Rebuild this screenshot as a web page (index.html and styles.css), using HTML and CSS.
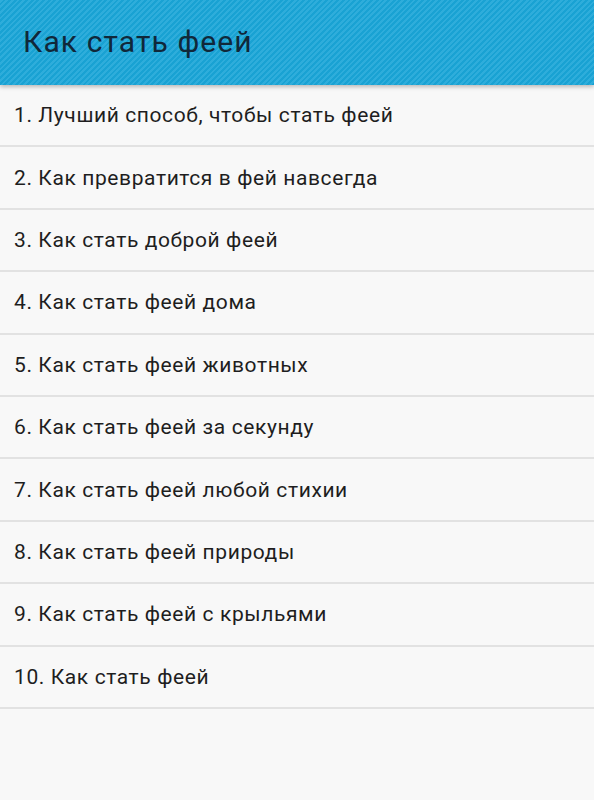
FILE: index.html
```html
<!DOCTYPE html>
<html lang="ru">
<head>
    <meta charset="UTF-8">
    <meta name="viewport" content="width=device-width, initial-scale=1.0">
    <title>Как стать феей</title>
    <link rel="stylesheet" href="styles.css">
</head>
<body>
    <!-- Action bar -->
    <header class="action-bar">
        <h1 class="title">Как стать феей</h1>
    </header>

    <!-- List -->
    <ul class="topic-list">
        <li class="topic-item">1. Лучший способ, чтобы стать феей</li>
        <li class="topic-item">2. Как превратится в фей навсегда</li>
        <li class="topic-item">3. Как стать доброй феей</li>
        <li class="topic-item">4. Как стать феей дома</li>
        <li class="topic-item">5. Как стать феей животных</li>
        <li class="topic-item">6. Как стать феей за секунду</li>
        <li class="topic-item">7. Как стать феей любой стихии</li>
        <li class="topic-item">8. Как стать феей природы</li>
        <li class="topic-item">9. Как стать феей с крыльями</li>
        <li class="topic-item">10. Как стать феей</li>
    </ul>
</body>
</html>
```

FILE: styles.css
```css
/* General */
body {
    margin: 0;
    padding: 0;
    min-height: 100vh;
    background-color: #f8f8f8;
    font-family: 'Roboto', 'Noto Sans', sans-serif;
    color: #222;
}

/* Action bar */
.action-bar {
    position: relative;
    height: 85px;
    padding: 0 23px;
    display: flex;
    align-items: center;
    background-color: #19a2d3;
    background-image: repeating-linear-gradient(
        -45deg,
        #19a2d3 0,
        #19a2d3 2px,
        #2eaddb 2px,
        #2eaddb 4px
    );
    box-shadow: 0 2px 4px rgba(0, 0, 0, 0.25);
}

.title {
    margin: 0;
    padding-bottom: 2px;
    font-size: 30px;
    font-weight: normal;
    letter-spacing: 1.1px;
    color: #10283a;
}

/* List */
.topic-list {
    list-style: none;
    margin: 0;
    padding: 0;
}

.topic-item {
    height: 60.4px;
    padding-left: 14px;
    display: flex;
    align-items: center;
    font-size: 21px;
    letter-spacing: 0.6px;
    color: #1e1e1e;
    border-bottom: 2px solid #e2e2e2;
}
```
